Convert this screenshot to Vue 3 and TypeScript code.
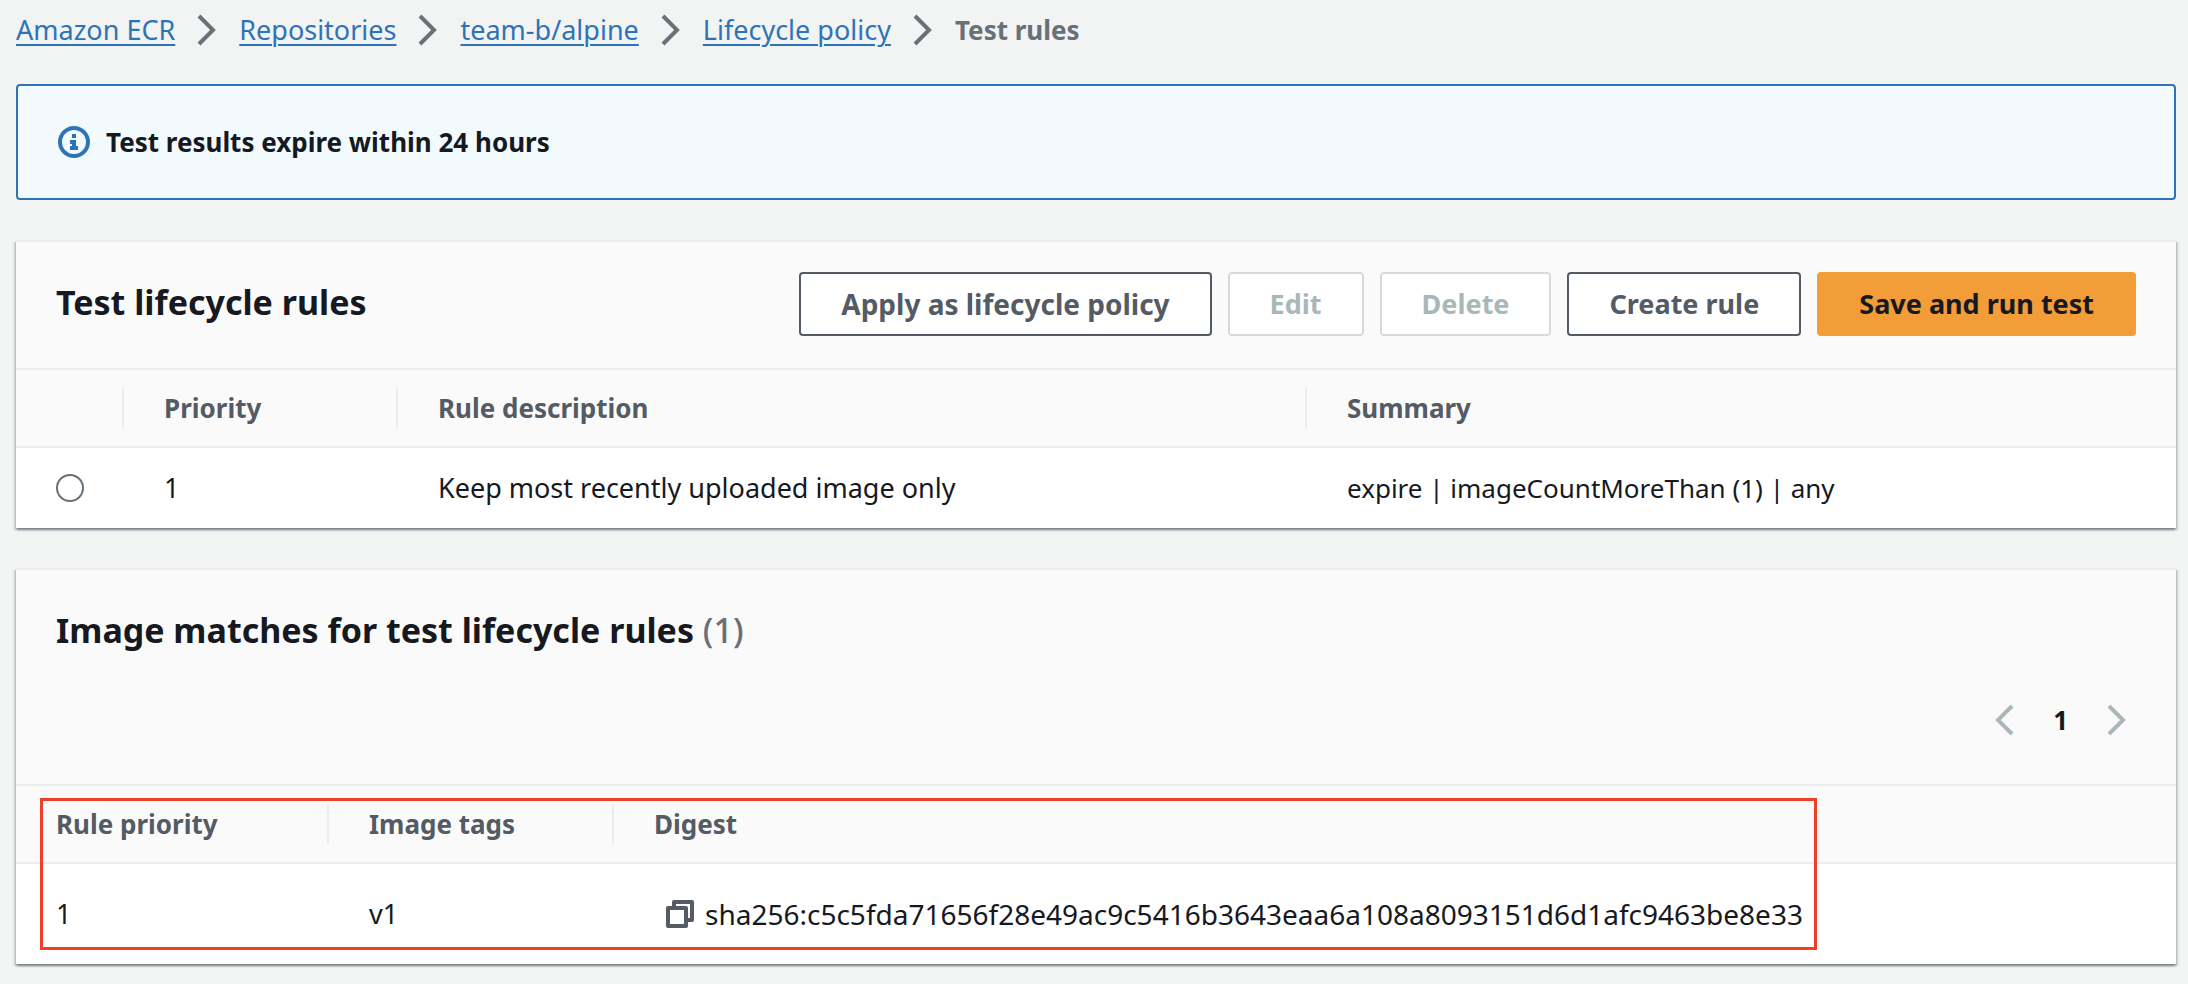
<script setup lang="ts">
import { ref } from 'vue'

interface Crumb {
  label: string
  href?: string
}

interface Rule {
  priority: number
  description: string
  summary: string
}

interface ImageMatch {
  priority: number
  tag: string
  digest: string
}

const crumbs: Crumb[] = [
  { label: 'Amazon ECR', href: '#ecr' },
  { label: 'Repositories', href: '#repositories' },
  { label: 'team-b/alpine', href: '#alpine' },
  { label: 'Lifecycle policy', href: '#policy' },
  { label: 'Test rules' },
]

const rules: Rule[] = [
  {
    priority: 1,
    description: 'Keep most recently uploaded image only',
    summary: 'expire | imageCountMoreThan (1) | any',
  },
]

const matches: ImageMatch[] = [
  {
    priority: 1,
    tag: 'v1',
    digest: 'sha256:c5c5fda71656f28e49ac9c5416b3643eaa6a108a8093151d6d1afc9463be8e33',
  },
]

const selected = ref<number | null>(null)

function copyDigest(digest: string) {
  navigator.clipboard?.writeText(digest)
}
</script>

<template>
  <div class="page">
    <nav aria-label="Breadcrumbs">
      <ol class="crumbs">
        <li v-for="crumb in crumbs" :key="crumb.label">
          <template v-if="crumb.href">
            <a :href="crumb.href">{{ crumb.label }}</a>
            <svg class="crumb-sep" viewBox="0 0 32 32" aria-hidden="true">
              <path d="M8 2l14 14L8 30" />
            </svg>
          </template>
          <span v-else class="current" aria-current="page">{{ crumb.label }}</span>
        </li>
      </ol>
    </nav>

    <div class="alert" role="status">
      <svg class="info" viewBox="0 0 32 32" aria-hidden="true">
        <circle cx="16" cy="16" r="14" />
        <path class="solid" d="M14 8h4v4h-4zM12 14h6v6h2v4h-8v-4h2v-2h-2z" />
      </svg>
      <strong>Test results expire within 24 hours</strong>
    </div>

    <section class="panel" aria-labelledby="rules-title">
      <header class="panel-head">
        <h2 id="rules-title">Test lifecycle rules</h2>
        <div class="actions">
          <button type="button" class="btn apply">Apply as lifecycle policy</button>
          <button type="button" class="btn" disabled>Edit</button>
          <button type="button" class="btn" disabled>Delete</button>
          <button type="button" class="btn">Create rule</button>
          <button type="button" class="btn primary">Save and run test</button>
        </div>
      </header>
      <table class="rules">
        <colgroup>
          <col class="c-select" />
          <col class="c-priority" />
          <col class="c-description" />
          <col />
        </colgroup>
        <thead>
          <tr>
            <td><span class="divider"></span></td>
            <th scope="col">Priority<span class="divider"></span></th>
            <th scope="col">Rule description<span class="divider"></span></th>
            <th scope="col">Summary</th>
          </tr>
        </thead>
        <tbody>
          <tr v-for="rule in rules" :key="rule.priority">
            <td>
              <input
                v-model="selected"
                type="radio"
                name="rule"
                :value="rule.priority"
                :aria-label="`Select rule ${rule.priority}`"
              />
            </td>
            <td>{{ rule.priority }}</td>
            <td>{{ rule.description }}</td>
            <td class="summary">{{ rule.summary }}</td>
          </tr>
        </tbody>
      </table>
    </section>

    <section class="panel" aria-labelledby="matches-title">
      <header class="panel-head stacked">
        <h2 id="matches-title">
          Image matches for test lifecycle rules <span class="count">({{ matches.length }})</span>
        </h2>
        <nav class="pager" aria-label="Pagination">
          <button type="button" disabled aria-label="Previous page">
            <svg viewBox="0 0 32 32" aria-hidden="true"><path d="M23 2L9 16l14 14" /></svg>
          </button>
          <button type="button" class="page-number" aria-current="page">1</button>
          <button type="button" disabled aria-label="Next page">
            <svg viewBox="0 0 32 32" aria-hidden="true"><path d="M9 2l14 14L9 30" /></svg>
          </button>
        </nav>
      </header>
      <div class="matches-wrap">
        <table class="matches">
          <colgroup>
            <col class="c-rule" />
            <col class="c-tags" />
            <col />
          </colgroup>
          <thead>
            <tr>
              <th scope="col">Rule priority<span class="divider"></span></th>
              <th scope="col">Image tags<span class="divider"></span></th>
              <th scope="col">Digest</th>
            </tr>
          </thead>
          <tbody>
            <tr v-for="match in matches" :key="match.digest">
              <td>{{ match.priority }}</td>
              <td>{{ match.tag }}</td>
              <td>
                <div class="digest">
                  <button type="button" aria-label="Copy digest" @click="copyDigest(match.digest)">
                    <svg viewBox="0 0 28 28" aria-hidden="true">
                      <path d="M8 8V2h18v18h-6M2 8h18v18H2z" />
                    </svg>
                  </button>
                  <span>{{ match.digest }}</span>
                </div>
              </td>
            </tr>
          </tbody>
        </table>
        <div class="highlight"></div>
      </div>
    </section>
  </div>
</template>

<style>
body {
  background: #f2f3f3;
}
</style>

<style scoped>
.page {
  padding: 8px 12px 20px 16px;
  color: #16191f;
  font-family: "Noto Sans", "Open Sans", sans-serif;
  font-size: 27px;
  line-height: 44px;
}

.crumbs {
  display: flex;
  margin: 0 0 32px;
  padding: 0;
  list-style: none;
}

.crumbs li {
  display: flex;
  align-items: center;
}

.crumbs a {
  color: #2e73b8;
  text-decoration-thickness: 2px;
  text-underline-offset: 4px;
}

.crumb-sep {
  width: 32px;
  height: 32px;
  margin: 0 16px;
}

svg {
  display: block;
  flex: none;
  fill: none;
  stroke: currentColor;
  stroke-width: 4;
}

.crumb-sep,
.current {
  color: #687078;
}

.current {
  font-size: 26px;
  font-weight: 700;
}

.alert {
  display: flex;
  align-items: center;
  gap: 16px;
  padding: 34px 40px;
  border: 2px solid #2e73b8;
  border-radius: 4px;
  background: #f2fafd;
  font-size: 26px;
}

.info {
  width: 32px;
  height: 32px;
  color: #2e73b8;
}

.solid {
  fill: currentColor;
  stroke: none;
}

.panel {
  margin-top: 40px;
  border-top: 2px solid #eaeded;
  background: #fff;
  box-shadow: 0 2px 2px #001c244d, 2px 2px 2px #00071626, -2px 2px 2px #00071626;
}

.panel-head {
  display: flex;
  align-items: center;
  justify-content: space-between;
  gap: 16px;
  padding: 30px 40px 32px;
  border-bottom: 2px solid #eaeded;
  background: #fafafa;
}

h2 {
  margin: 0;
  padding-bottom: 4px;
  font-size: 34px;
  line-height: 44px;
}

.count {
  color: #687078;
  font-weight: 500;
}

.actions {
  display: flex;
  gap: 16px;
}

button {
  margin: 0;
  padding: 0;
  border: 0;
  background: none;
  color: inherit;
  font: inherit;
}

.btn {
  height: 64px;
  padding: 0 40px;
  border: 2px solid #545b64;
  border-radius: 4px;
  background: #fff;
  color: #545b64;
  font-size: 27px;
  font-weight: 700;
  line-height: 40px;
}

.btn:disabled {
  border-color: #d5dbdb;
  color: #aab7b8;
}

.apply {
  font-size: 28px;
}

.primary {
  border-color: #f29d38;
  background: #f29d38;
  color: #16191f;
}

table {
  width: 100%;
  border-collapse: separate;
  border-spacing: 0;
  table-layout: fixed;
}

.c-select {
  width: 108px;
}

.c-priority {
  width: 274px;
}

.c-description {
  width: 909px;
}

.c-rule {
  width: 313px;
}

.c-tags {
  width: 285px;
}

th,
td {
  padding: 18px 40px;
  text-align: left;
  vertical-align: middle;
}

thead th,
thead td {
  position: relative;
  padding: 16px 40px;
  border-bottom: 2px solid #eaeded;
  background: #fafafa;
  color: #545b64;
  font-size: 26px;
}

.divider {
  position: absolute;
  top: 18px;
  right: 0;
  bottom: 18px;
  width: 2px;
  background: #eaeded;
}

.summary {
  font-size: 26px;
}

input[type="radio"] {
  display: block;
  width: 28px;
  height: 28px;
  margin: 0;
  border: 2px solid #687078;
  border-radius: 50%;
  background: #fff;
  appearance: none;
}

input[type="radio"]:checked {
  border: 8px solid #2e73b8;
}

.stacked {
  flex-direction: column;
  align-items: stretch;
  gap: 42px;
  padding: 38px 40px 42px;
}

.pager {
  display: flex;
  align-items: center;
  justify-content: flex-end;
  gap: 24px;
  color: #aab7b8;
}

.pager svg {
  width: 32px;
  height: 32px;
}

.pager button {
  padding: 0 4px;
}

.pager .page-number {
  color: #16191f;
  font-size: 26px;
  font-weight: 700;
}

.matches-wrap {
  position: relative;
}

.matches tbody td {
  padding: 28px 40px;
}

.digest {
  display: flex;
  align-items: center;
  gap: 11px;
  margin-left: 12px;
  font-size: 28px;
  white-space: nowrap;
}

.digest button {
  color: #545b64;
}

.digest svg {
  width: 28px;
  height: 28px;
  stroke-linejoin: round;
}

/* Annotation frame drawn over the matched image */
.highlight {
  position: absolute;
  top: 12px;
  left: 24px;
  width: 1777px;
  bottom: 14px;
  box-sizing: border-box;
  border: 3px solid #ee4027;
  pointer-events: none;
}
</style>
